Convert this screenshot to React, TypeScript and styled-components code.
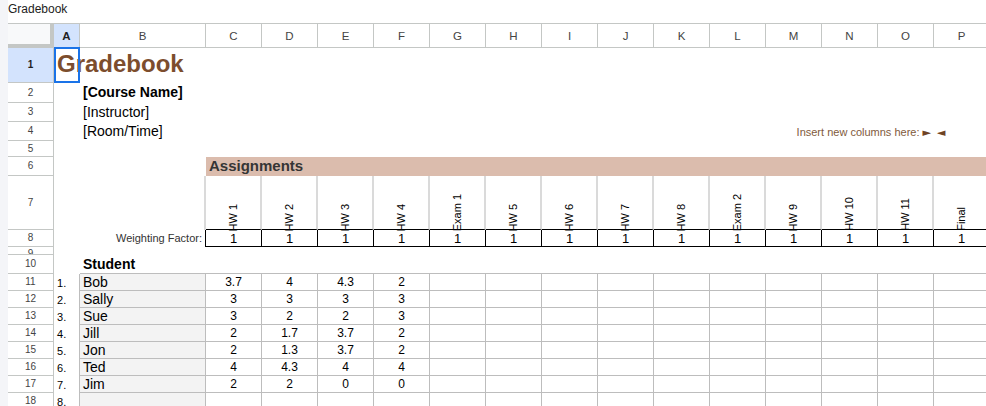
import styled, { createGlobalStyle } from "styled-components"

const GRID = "#c4c7c5"
const TABLE = "#bdbdbd"
const SOFT = "#dadada"
const INK = "#000"
const BAND = "#dbbcad"

const COLS = ["C", "D", "E", "F", "G", "H", "I", "J", "K", "L", "M", "N", "O", "P"]
const LABELS = ["HW 1", "HW 2", "HW 3", "HW 4", "Exam 1", "HW 5", "HW 6", "HW 7", "HW 8", "Exam 2", "HW 9", "HW 10", "HW 11", "Final"]
const W_A = 26
const W_B = 126
const W_COL = 56

const STUDENTS = [
    { name: "Bob", scores: ["3.7", "4", "4.3", "2"] },
    { name: "Sally", scores: ["3", "3", "3", "3"] },
    { name: "Sue", scores: ["3", "2", "2", "3"] },
    { name: "Jill", scores: ["2", "1.7", "3.7", "2"] },
    { name: "Jon", scores: ["2", "1.3", "3.7", "2"] },
    { name: "Ted", scores: ["4", "4.3", "4", "4"] },
    { name: "Jim", scores: ["2", "2", "0", "0"] },
    { name: "", scores: [] },
]

const GlobalStyle = createGlobalStyle`
    body {
        margin: 0;
        background: #fff;
        font-family: "Liberation Sans", Arial, sans-serif;
    }
`

// 행 하나: 행 번호 + 셀들
const SheetRow = ({ n, h, active, tiny, children }: { n: number; h: number; active?: boolean; tiny?: boolean; children?: React.ReactNode }) => (
    <Row $h={h}>
        <RowHead $active={active} $tiny={tiny}>{n}</RowHead>
        {children}
    </Row>
)

const App = () => {
    return (
        <Page>
            <GlobalStyle />
            <Caption>Gradebook</Caption>
            <Sheet>
                <HeaderRow>
                    <Corner />
                    <ColHead $w={W_A} $active>A</ColHead>
                    <ColHead $w={W_B}>B</ColHead>
                    {COLS.map(c => (
                        <ColHead key={c} $w={W_COL}>{c}</ColHead>
                    ))}
                </HeaderRow>

                <SheetRow n={1} h={35} active>
                    <Cell $w={W_A}>
                        <Title>Gradebook</Title>
                        <Selection />
                    </Cell>
                </SheetRow>
                <SheetRow n={2} h={20}>
                    <Cell $w={W_A} />
                    <Cell $w={W_B} $pb={3}><Heading>[Course Name]</Heading></Cell>
                </SheetRow>
                <SheetRow n={3} h={19}>
                    <Cell $w={W_A} />
                    <Cell $w={W_B}><Plain>[Instructor]</Plain></Cell>
                </SheetRow>
                <SheetRow n={4} h={19}>
                    <Cell $w={W_A} />
                    <Cell $w={W_B}><Plain>[Room/Time]</Plain></Cell>
                    {COLS.map(c => (
                        <Cell key={c} $w={W_COL} $align={c === "O" ? "end" : "start"}>
                            {c === "O" && <Hint>Insert new columns here: <Arrow>►</Arrow></Hint>}
                            {c === "P" && <Hint><Arrow>◄</Arrow></Hint>}
                        </Cell>
                    ))}
                </SheetRow>
                <SheetRow n={5} h={16} />
                <SheetRow n={6} h={19}>
                    <Cell $w={W_A} />
                    <Cell $w={W_B} />
                    <Band $w={W_COL * COLS.length}>
                        <BandTitle>Assignments</BandTitle>
                    </Band>
                </SheetRow>
                <SheetRow n={7} h={54}>
                    <Cell $w={W_A} />
                    <Cell $w={W_B} $right={`2px solid ${SOFT}`} />
                    {LABELS.map(l => (
                        <Cell key={l} $w={W_COL} $align="center" $pb={0} $right={`2px solid ${SOFT}`} $bottom={`1px solid ${INK}`}>
                            <VLabel>{l}</VLabel>
                        </Cell>
                    ))}
                </SheetRow>
                <SheetRow n={8} h={17}>
                    <Cell $w={W_A} />
                    <Cell $w={W_B} $align="end" $right={`1px solid ${INK}`}>
                        <Note>Weighting Factor:</Note>
                    </Cell>
                    {COLS.map(c => (
                        <Cell key={c} $w={W_COL} $align="center" $pb={0} $right={`1px solid ${INK}`} $bottom={`1px solid ${INK}`}>
                            <Weight>1</Weight>
                        </Cell>
                    ))}
                </SheetRow>
                <SheetRow n={9} h={8} tiny />
                <SheetRow n={10} h={19}>
                    <Cell $w={W_A} />
                    <Cell $w={W_B} $pb={1} $bottom={`1px solid ${TABLE}`}><Heading>Student</Heading></Cell>
                    {COLS.map(c => (
                        <Cell key={c} $w={W_COL} $bottom={`1px solid ${TABLE}`} />
                    ))}
                </SheetRow>
                {STUDENTS.map((s, i) => (
                    <SheetRow key={i} n={11 + i} h={17}>
                        <Cell $w={W_A} $pb={0} $right={`1px solid ${TABLE}`}>
                            <Num>{i + 1}.</Num>
                        </Cell>
                        <Cell $w={W_B} $pb={0} $bg="#f3f3f3" $right={`1px solid ${TABLE}`} $bottom={`1px solid ${TABLE}`}>
                            <Plain>{s.name}</Plain>
                        </Cell>
                        {COLS.map((c, j) => (
                            <Cell key={c} $w={W_COL} $align="center" $pb={0} $right={`1px solid ${TABLE}`} $bottom={`1px solid ${TABLE}`}>
                                {s.scores[j] && <Score>{s.scores[j]}</Score>}
                            </Cell>
                        ))}
                    </SheetRow>
                ))}
            </Sheet>
        </Page>
    )
}

export default App

const Page = styled.div`
    border-left: 8px solid #f4f5f8;
    height: 406px;
    overflow: hidden;
`

const Caption = styled.div`
    height: 23px;
    box-sizing: border-box;
    padding-top: 2px;
    font-size: 12px;
    line-height: 14px;
    color: #222;
`

const Sheet = styled.div`
    display: flex;
    flex-direction: column;
    overflow: hidden;
`

const HeaderRow = styled.div`
    display: flex;
    height: 25px;
    border-top: 1px solid ${GRID};
    box-sizing: border-box;
`

const Corner = styled.div`
    flex: none;
    width: 46px;
    box-sizing: border-box;
    background: #f8f9fa;
    border-right: 4px solid ${GRID};
    border-bottom: 4px solid ${GRID};
`

const ColHead = styled.div<{ $w: number; $active?: boolean }>`
    flex: none;
    width: ${p => p.$w}px;
    box-sizing: border-box;
    display: flex;
    align-items: center;
    justify-content: center;
    font-size: 11.5px;
    font-weight: ${p => (p.$active ? 700 : 400)};
    color: ${p => (p.$active ? "#1f1f1f" : "#444")};
    background: ${p => (p.$active ? "#d3e3fd" : "#fff")};
    border-right: 1px solid ${GRID};
    border-bottom: 1px solid ${GRID};
`

const Row = styled.div<{ $h: number }>`
    display: flex;
    height: ${p => p.$h}px;
    flex: none;
`

const RowHead = styled.div<{ $active?: boolean; $tiny?: boolean }>`
    flex: none;
    width: 46px;
    height: 100%;
    box-sizing: border-box;
    display: flex;
    align-items: ${p => (p.$tiny ? "flex-start" : "center")};
    justify-content: center;
    padding-top: ${p => (p.$tiny ? "1px" : "0")};
    overflow: hidden;
    font-size: 10px;
    line-height: 12px;
    font-weight: ${p => (p.$active ? 700 : 400)};
    color: ${p => (p.$active ? "#1f1f1f" : "#444")};
    background: ${p => (p.$active ? "#d3e3fd" : "#fff")};
    border-right: 1px solid ${GRID};
    border-bottom: 1px solid ${GRID};
`

const Cell = styled.div<{ $w: number; $align?: "start" | "center" | "end"; $pb?: number; $bg?: string; $right?: string; $bottom?: string }>`
    position: relative;
    flex: none;
    width: ${p => p.$w}px;
    height: 100%;
    box-sizing: border-box;
    display: flex;
    align-items: flex-end;
    justify-content: ${p => (p.$align === "center" ? "center" : p.$align === "end" ? "flex-end" : "flex-start")};
    padding: 0 3px ${p => p.$pb ?? 2}px;
    white-space: nowrap;
    background: ${p => p.$bg ?? "transparent"};
    border-right: ${p => p.$right ?? "none"};
    border-bottom: ${p => p.$bottom ?? "none"};
`

const Band = styled.div<{ $w: number }>`
    flex: none;
    width: ${p => p.$w}px;
    height: 100%;
    box-sizing: border-box;
    display: flex;
    align-items: flex-end;
    padding: 0 3px 2px;
    background: ${BAND};
`

const Selection = styled.div`
    position: absolute;
    left: 0;
    top: -1px;
    width: 26px;
    height: 36px;
    box-sizing: border-box;
    border: 2px solid #1a73e8;
    pointer-events: none;
    z-index: 2;
`

const Title = styled.span`
    font-size: 24px;
    line-height: 28px;
    font-weight: 700;
    color: #7c4d2d;
    margin-bottom: 3px;
`

const Heading = styled.span`
    font-size: 14px;
    line-height: 16px;
    font-weight: 700;
    color: #000;
`

const Plain = styled.span`
    font-size: 14px;
    line-height: 16px;
    color: #000;
`

const Hint = styled.span`
    font-size: 11px;
    line-height: 13px;
    color: #7f5a3c;
`

const Arrow = styled.span`
    font-family: "DejaVu Sans", sans-serif;
    font-size: 11px;
    color: #6f4325;
`

const BandTitle = styled.span`
    font-size: 15px;
    line-height: 17px;
    font-weight: 700;
    color: #353535;
`

const VLabel = styled.span`
    writing-mode: vertical-rl;
    transform: rotate(180deg);
    font-size: 11px;
    line-height: 13px;
    color: #000;
    margin-bottom: -2px;
    position: relative;
    z-index: 1;
`

const Note = styled.span`
    font-size: 11px;
    line-height: 13px;
    color: #333;
`

const Weight = styled.span`
    font-size: 13px;
    line-height: 15px;
    color: #000;
`

const Num = styled.span`
    font-size: 11px;
    line-height: 13px;
    color: #000;
    margin-bottom: 1px;
`

const Score = styled.span`
    font-size: 12px;
    line-height: 14px;
    color: #000;
    margin-bottom: 1px;
`
